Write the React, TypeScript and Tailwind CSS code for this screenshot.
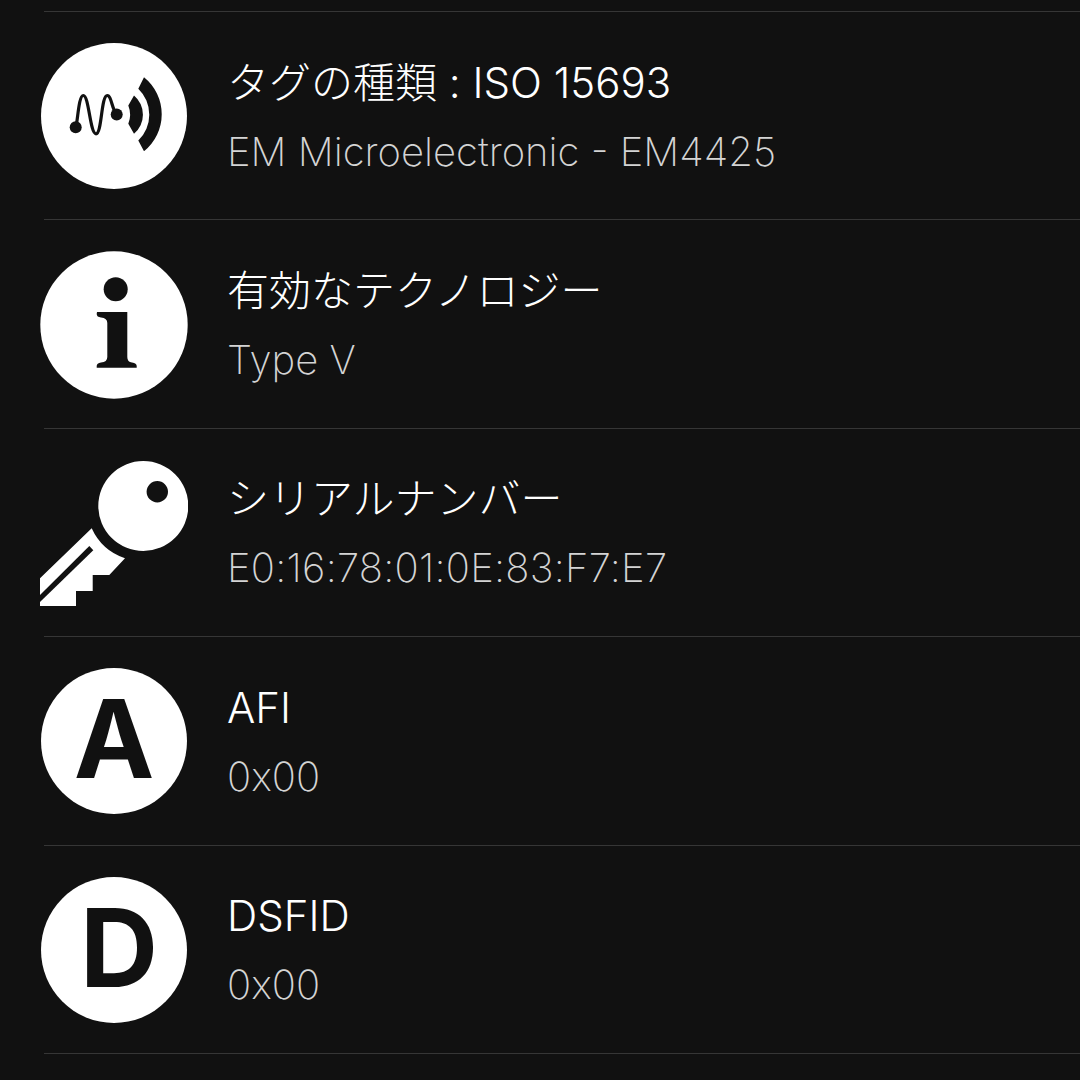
const font = "[font-family:Inter,'Noto_Sans_CJK_JP',sans-serif]";

function WaveIcon() {
  return (
    <svg viewBox="0 0 148 148" className="w-[148px] h-[148px] shrink-0">
      <circle cx="74" cy="74" r="73" fill="#fff" />
      <circle cx="35.7" cy="85.2" r="6" fill="#111" />
      <circle cx="76.7" cy="72.5" r="6" fill="#111" />
      <path d="M36 85C38 75 39 53.5 43.3 53.5C49 53.5 50 91.8 56 91.8C62 91.8 61 53.5 67.3 53.5C71.5 53.5 72 68 76.7 72.5" fill="none" stroke="#111" strokeWidth="3.2" />
      <path d="M94 53.5A25 25 0 0 1 94 91.8L88.3 81.8A24.7 24.7 0 0 0 88.3 63.5Z" fill="#111" />
      <path d="M104 35.2A47.5 47.5 0 0 1 104 109.2L98.3 98.5A35.9 35.9 0 0 0 98.3 46.8Z" fill="#111" />
    </svg>
  );
}

function InfoIcon() {
  return (
    <svg viewBox="0 0 148 148" className="w-[148px] h-[148px] shrink-0">
      <circle cx="74" cy="74" r="73.7" fill="#fff" />
      <circle cx="75.7" cy="38.3" r="12" fill="#111" />
      <path d="M57 61H87.3V106Q87.3 111 92 111.5Q96.7 112 96.7 115V116.7H56.7V115Q56.7 112 61 111.5Q67.3 111 67.3 106V72Q67.3 67 61 66.5Q56.7 66 56.7 63Z" fill="#111" />
    </svg>
  );
}

function KeyIcon() {
  return (
    <svg viewBox="0 0 148 148" className="w-[148px] h-[148px] shrink-0">
      <path fillRule="evenodd" d="M103.3 2a45 45 0 1 0 0 90a45 45 0 1 0 0-90ZM117.3 22a10.7 10.7 0 1 1 0 21.4a10.7 10.7 0 1 1 0-21.4Z" fill="#fff" />
      <path d="M51.7 69.3L0 119.3V147H36V132H52.7V116H69.3L85 99.3A56 56 0 0 1 51.7 69.3Z" fill="#fff" />
      <path d="M0 136L49.3 87L53.3 91.3L0 143Z" fill="#111" />
    </svg>
  );
}

function LetterIcon({ letter, nudge }: { letter: string; nudge: string }) {
  return (
    <div className={`w-[146px] h-[146px] mx-[1px] shrink-0 rounded-full bg-white flex items-center justify-center text-[#111] text-[108px] leading-none font-bold [font-family:Inter,sans-serif] ${nudge}`}>
      {letter}
    </div>
  );
}

const rows = [
  { icon: <WaveIcon />, title: "タグの種類 : ISO 15693", sub: "EM Microelectronic - EM4425", subClass: "" },
  { icon: <InfoIcon />, title: "有効なテクノロジー", sub: "Type V", subClass: "" },
  { icon: <KeyIcon />, title: "シリアルナンバー", sub: "E0:16:78:01:0E:83:F7:E7", subClass: "tracking-[0.26px]" },
  { icon: <LetterIcon letter="A" nudge="pb-[5px]" />, title: "AFI", sub: "0x00", subClass: "" },
  { icon: <LetterIcon letter="D" nudge="pl-[10px] pb-[3px]" />, title: "DSFID", sub: "0x00", subClass: "" },
];

export default function App() {
  return (
    <main className="w-[1080px] h-[1080px] overflow-hidden bg-[#111111] pt-[11px] pl-[44px]">
      <div className="border-t border-[#363636]">
        {rows.map((row) => (
          <div key={row.title} className="h-[208.4px] -ml-[4px] flex items-center gap-[40px]">
            {row.icon}
            <div className={`${font} flex-1 h-full border-b border-[#363636] -ml-[184px] pl-[183px] flex flex-col justify-center pt-[2px]`}>
              <div className="text-[42px] leading-[69px] font-light text-white">{row.title}</div>
              <div className={`text-[40px] leading-[69px] font-extralight text-[#d4d4d4] ${row.subClass}`}>{row.sub}</div>
            </div>
          </div>
        ))}
      </div>
    </main>
  );
}
